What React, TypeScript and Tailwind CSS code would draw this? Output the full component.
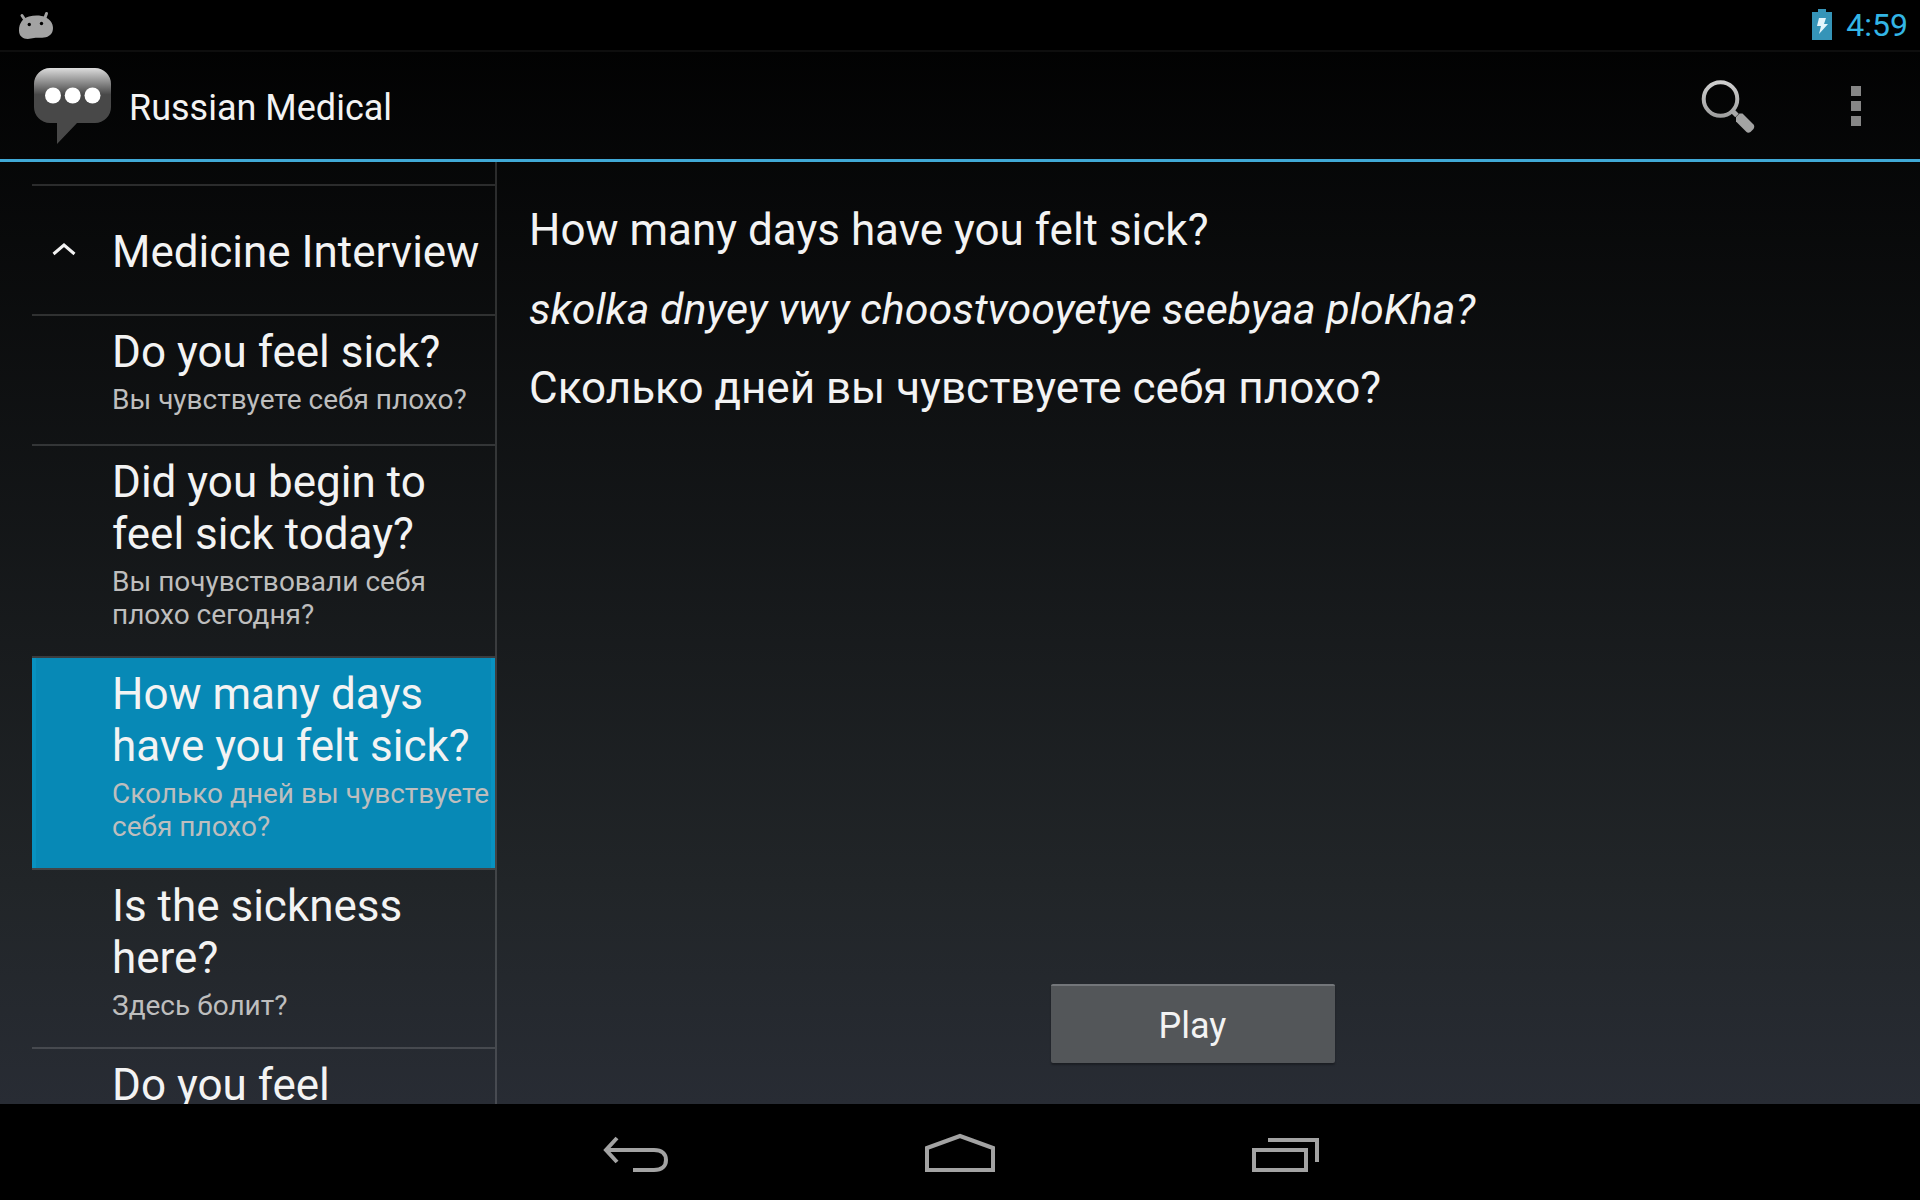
const phrases = [
  { en: 'Do you feel sick?', ru: 'Вы чувствуете себя плохо?' },
  { en: 'Did you begin to feel sick today?', ru: 'Вы почувствовали себя плохо сегодня?' },
  { en: 'How many days have you felt sick?', ru: 'Сколько дней вы чувствуете себя плохо?', selected: true },
  { en: 'Is the sickness here?', ru: 'Здесь болит?' },
  { en: 'Do you feel', ru: '' },
]

const StatusBar = () => (
  <div className="flex h-[52px] shrink-0 items-center justify-between border-b-2 border-[#0e0e0e] bg-black pr-3 pl-4">
    <svg width="40" height="32" viewBox="0 0 40 32" fill="#a3a3a3">
      <path d="M6 6.5 9 11M30.5 4.5 28.5 10" stroke="#a3a3a3" strokeWidth="3" strokeLinecap="round" />
      <path d="M13 7.5C18 6 25 6 29 8c5 2.500 8 6 8 11 0 6-4 9-9 9.500-5 .5-9-.5-13 1C9 31 3 28.500 3 21.500 3 14 7 9 13 7.500z" />
      <circle cx="13.300" cy="15.500" r="1.700" fill="#000" />
      <circle cx="25.500" cy="14.500" r="1.700" fill="#000" />
    </svg>
    <div className="flex items-center gap-3.5">
      <svg width="20" height="32" viewBox="0 0 20 32">
        <path d="M6 0h8v3h6v28H0V3h6z" fill="#3594b8" />
        <path d="M7 9h7l-2 6h4L7 25l2-8H5z" fill="#e4f5fb" />
      </svg>
      <span className="text-[32px] leading-9 text-[#33b5e5]">4:59</span>
    </div>
  </div>
)

const ActionBar = () => (
  <header className="flex h-[110px] shrink-0 items-stretch border-b-3 border-[#40a9d6]">
    <div className="flex flex-1 items-center gap-[15px] pl-8">
      <svg width="82" height="80" viewBox="0 0 82 80">
        <defs>
          <linearGradient id="bubble" x1="0" y1="0" x2="0" y2="1">
            <stop offset="0" stopColor="#dcdcdc" />
            <stop offset="0.350" stopColor="#484848" />
            <stop offset="1" stopColor="#484848" />
          </linearGradient>
        </defs>
        <path
          d="M18 2h45a16 16 0 0 1 16 16v23a16 16 0 0 1-16 16H45L25 78V57h-7A16 16 0 0 1 2 41V18A16 16 0 0 1 18 2z"
          fill="url(#bubble)"
        />
        <circle cx="21" cy="29.500" r="8" fill="#fff" />
        <circle cx="40.700" cy="29.500" r="8" fill="#fff" />
        <circle cx="60.500" cy="29.500" r="8" fill="#fff" />
      </svg>
      <h1 className="pt-1 text-4xl text-[#f3f3f3]">Russian Medical</h1>
    </div>
    <button aria-label="Search" className="flex w-32 items-center justify-center">
      <svg width="56" height="56" viewBox="0 0 56 56" fill="none">
        <defs>
          <linearGradient id="lens" x1="0" y1="0" x2="0" y2="1">
            <stop offset="0" stopColor="#cfcfcf" />
            <stop offset="1" stopColor="#a0a0a0" />
          </linearGradient>
        </defs>
        <circle cx="20.500" cy="21" r="16.800" stroke="url(#lens)" strokeWidth="4" />
        <path d="M32 32.500l5 5" stroke="#a8a8a8" strokeWidth="5" />
        <path d="M36 39l3.500-3.500h3l11 11c1 1 1 3 0 4.500l-3 3c-1.500 1-3 1-4 0L36 43.500z" fill="#a3a3a3" />
      </svg>
    </button>
    <button aria-label="More options" className="flex w-32 flex-col items-center justify-center gap-[5px]">
      <span className="size-2.5 bg-[#868686]" />
      <span className="size-2.5 bg-[#868686]" />
      <span className="size-2.5 bg-[#868686]" />
    </button>
  </header>
)

const PhraseList = () => (
  <aside className="w-[497px] shrink-0 overflow-hidden border-r-2 border-white/15 pt-[22px] pl-8">
    <button aria-expanded="true" className="flex h-[130px] w-full items-center border-t-2 border-white/15 pt-1 pl-5 text-left">
      <svg width="24" height="20" viewBox="0 0 24 20" fill="none" className="mr-9">
        <path d="M1.500 12 12 3l10.500 9" stroke="#f3f3f3" strokeWidth="3" />
      </svg>
      <span className="text-[44px] leading-[52px] whitespace-nowrap">Medicine Interview</span>
    </button>
    <ul>
      {phrases.map((phrase) => (
        <li key={phrase.en} className="border-t-2 border-white/15">
          <button
            className={
              phrase.selected
                ? 'flex min-h-32 w-full flex-col border-x-4 border-[#0892c1] bg-[#0789b6] pt-2.5 pb-[25px] pl-[76px] text-left'
                : 'flex min-h-32 w-full flex-col pt-2.5 pb-[25px] pl-20 text-left'
            }
          >
            <span className="text-[44px] leading-[52px]">{phrase.en}</span>
            {phrase.ru && <span className="mt-[5px] text-[28px] leading-[33px] text-[#bebebe]">{phrase.ru}</span>}
          </button>
        </li>
      ))}
    </ul>
  </aside>
)

const PhraseDetail = () => (
  <main className="flex flex-1 flex-col pt-[42px] pr-16 pb-[41px] pl-8">
    <div className="flex flex-col gap-[27px] text-[44px] leading-[52px]">
      <p>How many days have you felt sick?</p>
      <p className="text-[43px] italic">skolka dnyey vwy choostvooyetye seebyaa ploKha?</p>
      <p>Сколько дней вы чувствуете себя плохо?</p>
    </div>
    <button className="mt-auto h-[79px] w-[284px] self-center rounded-xs border-t-2 border-[#73767a] bg-[#535659] pt-0.5 text-4xl shadow-[0_2px_2px_rgba(0,0,0,0.3)]">
      Play
    </button>
  </main>
)

const NavBar = () => (
  <nav className="flex h-24 shrink-0 justify-center bg-black">
    <button aria-label="Back" className="flex w-80 items-center justify-center">
      <svg width="80" height="48" viewBox="0 0 80 48" fill="none" stroke="#a3a3a3" strokeWidth="4">
        <path d="M17 10 6 22l11 12" />
        <path d="M6 22h48c8 0 12 4 12 10s-4 10-12 10H33" />
      </svg>
    </button>
    <button aria-label="Home" className="flex w-80 items-center justify-center">
      <svg width="80" height="48" viewBox="0 0 80 48" fill="none" stroke="#a3a3a3" strokeWidth="4">
        <path d="M7 42V20L40 8l33 12v22z" />
      </svg>
    </button>
    <button aria-label="Recent apps" className="flex w-80 items-center justify-center">
      <svg width="80" height="48" viewBox="0 0 80 48" fill="none" stroke="#a3a3a3" strokeWidth="4">
        <path d="M14 22h52v20H14z" />
        <path d="M28 12h49v22" />
      </svg>
    </button>
  </nav>
)

export default function App() {
  return (
    <div className="flex h-screen flex-col bg-black font-[Roboto,sans-serif] text-[#f3f3f3]">
      <div className="flex min-h-0 flex-1 flex-col bg-linear-to-b/srgb from-black via-[#212528] via-80% to-[#282c34]">
        <StatusBar />
        <ActionBar />
        <div className="flex min-h-0 flex-1">
          <PhraseList />
          <PhraseDetail />
        </div>
      </div>
      <NavBar />
    </div>
  )
}
